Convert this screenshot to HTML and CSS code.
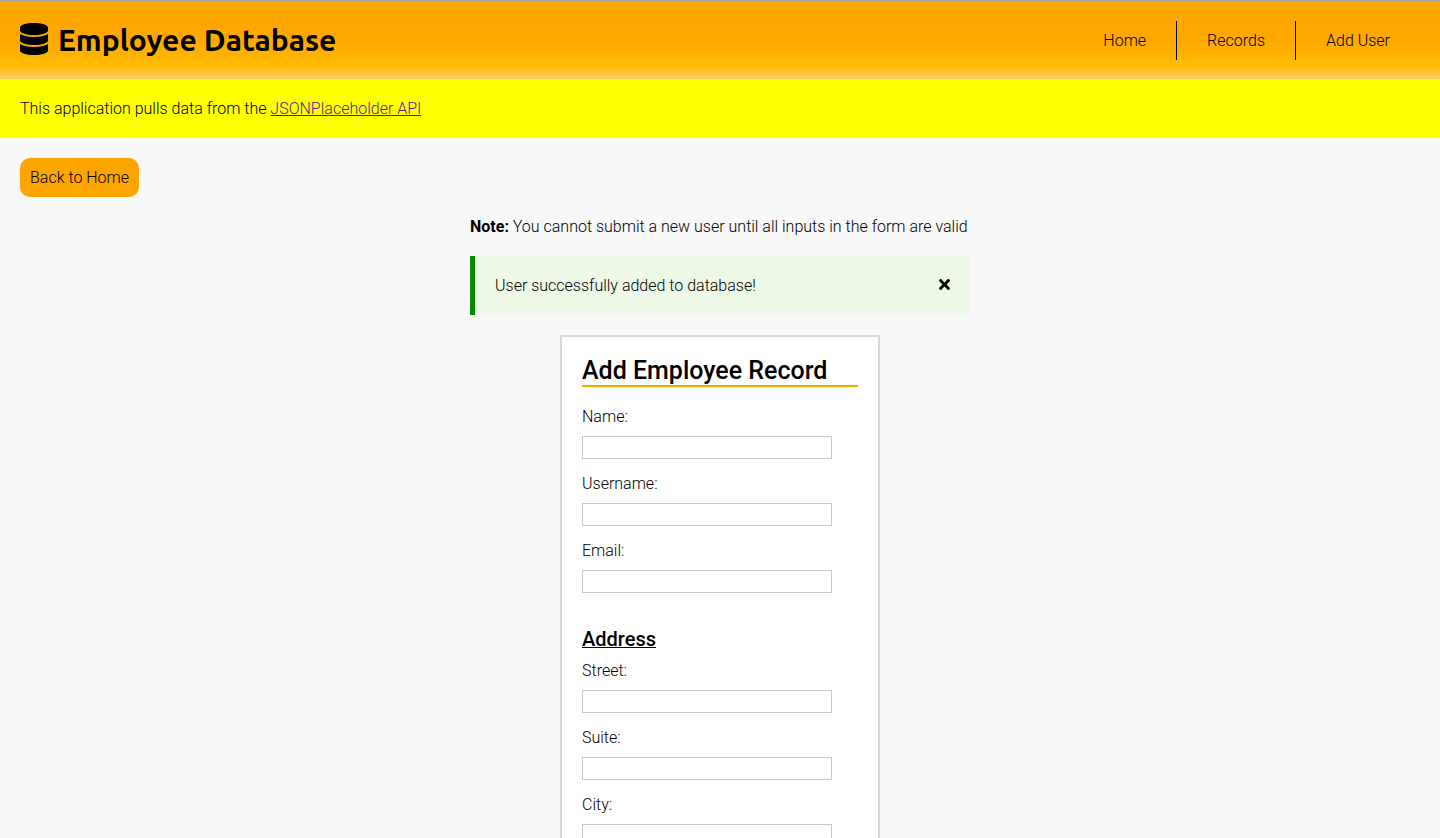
FILE: index.html
```html
<!DOCTYPE html>
<html lang="en">
<head>
  <meta charset="utf-8">
  <meta name="viewport" content="width=device-width, initial-scale=1">
  <title>Employee Database</title>
  <link rel="stylesheet" href="styles.css">
</head>
<body>
  <header class="site-header">
    <h1 class="brand">
      <svg class="brand-icon" viewBox="0 0 448 512" aria-hidden="true">
        <path d="M448 73.143v45.714C448 159.143 347.667 192 224 192S0 159.143 0 118.857V73.143C0 32.857 100.333 0 224 0s224 32.857 224 73.143zM448 176v102.857C448 319.143 347.667 352 224 352S0 319.143 0 278.857V176c48.125 33.143 136.208 48.572 224 48.572S399.874 209.143 448 176zm0 160v102.857C448 479.143 347.667 512 224 512S0 479.143 0 438.857V336c48.125 33.143 136.208 48.572 224 48.572S399.874 369.143 448 336z"/>
      </svg>
      Employee Database
    </h1>
    <nav class="site-nav">
      <a class="nav-link" href="#home">Home</a>
      <a class="nav-link" href="#records">Records</a>
      <a class="nav-link" href="#add-user">Add User</a>
    </nav>
  </header>
  <p class="banner">This application pulls data from the <a class="banner-link" href="#api">JSONPlaceholder API</a></p>
  <main class="content">
    <a class="back-button" href="#home">Back to Home</a>
    <div class="messages">
      <p><strong class="note-label">Note:</strong> You cannot submit a new user until all inputs in the form are valid</p>
      <div class="alert" role="status">
        <span>User successfully added to database!</span>
        <button class="alert-close" type="button" aria-label="Close">
          <svg class="close-icon" viewBox="0 0 352 352" aria-hidden="true">
            <path d="M242.72 176l100.07-100.07c12.28-12.28 12.28-32.19 0-44.48l-22.24-22.24c-12.28-12.28-32.19-12.28-44.48 0L176 109.28 75.93 9.21c-12.28-12.28-32.19-12.28-44.48 0L9.21 31.45c-12.28 12.28-12.28 32.19 0 44.48L109.28 176 9.21 276.07c-12.28 12.28-12.28 32.19 0 44.48l22.24 22.24c12.28 12.28 32.2 12.28 44.48 0L176 242.72l100.07 100.07c12.28 12.28 32.2 12.28 44.48 0l22.24-22.24c12.28-12.28 12.28-32.19 0-44.48L242.72 176z"/>
          </svg>
        </button>
      </div>
    </div>
    <form class="record-form">
      <h2 class="form-title">Add Employee Record</h2>
      <div class="fields">
        <div class="field"><label for="name">Name:</label><input class="text-input" id="name" type="text"></div>
        <div class="field"><label for="username">Username:</label><input class="text-input" id="username" type="text"></div>
        <div class="field"><label for="email">Email:</label><input class="text-input" id="email" type="email"></div>
      </div>
      <h3 class="section-title">Address</h3>
      <div class="fields">
        <div class="field"><label for="street">Street:</label><input class="text-input" id="street" type="text"></div>
        <div class="field"><label for="suite">Suite:</label><input class="text-input" id="suite" type="text"></div>
        <div class="field"><label for="city">City:</label><input class="text-input" id="city" type="text"></div>
      </div>
    </form>
  </main>
</body>
</html>
```
FILE: styles.css
```css
* {
  box-sizing: border-box;
  margin: 0;
  padding: 0;
}

html {
  scrollbar-width: none;
}

body {
  border-top: 1px solid #a6a6a6;
  background: #f8f8f8;
  color: #000;
  font: 300 16px/19px Roboto, sans-serif;
}

.site-header {
  display: flex;
  align-items: flex-start;
  justify-content: space-between;
  padding: 20px 20px 19px;
  background: linear-gradient(to bottom, #ffa500 0%, #ffa800 50%, #ffbb00 82%, #ffcc66 100%);
}

.brand {
  display: flex;
  align-items: flex-start;
  gap: 10px;
  font: 700 30px/38px Ubuntu, "Noto Sans", sans-serif;
}

.brand-icon {
  width: 28px;
  height: 32px;
  margin-top: 2px;
}

.site-nav {
  display: flex;
}

.nav-link {
  padding: 10px 30px;
  color: inherit;
  text-decoration: none;
}

.nav-link + .nav-link {
  border-left: 1px solid #000;
}

.banner {
  padding: 20px;
  background: #ff0;
}

.banner-link {
  color: #551a8b;
}

.content {
  display: flex;
  flex-direction: column;
  align-items: center;
  gap: 20px;
  padding: 20px;
}

.back-button {
  align-self: flex-start;
  padding: 10px;
  border-radius: 10px;
  background: #ffa500;
  color: inherit;
  text-decoration: none;
}

.messages {
  display: flex;
  flex-direction: column;
  gap: 20px;
  width: 100%;
  max-width: 500px;
}

.note-label {
  font-weight: 700;
}

.alert {
  display: flex;
  align-items: center;
  justify-content: space-between;
  padding: 20px;
  border-left: 5px solid #008c00;
  background: #edf8e7;
}

.alert-close {
  display: flex;
  padding-bottom: 3px;
  border: 0;
  background: none;
  cursor: pointer;
}

.close-icon {
  width: 11px;
  height: 11px;
}

.record-form {
  width: 100%;
  max-width: 320px;
  padding: 20px;
  border: 2px solid #d8d8d8;
  background: #fff;
}

.form-title {
  margin-bottom: 20px;
  border-bottom: 2px solid #ffa500;
  font-size: 25px;
  font-weight: 500;
  line-height: 28px;
}

.fields {
  display: flex;
  flex-direction: column;
  gap: 15px;
}

.field {
  display: flex;
  flex-direction: column;
  gap: 10px;
}

.text-input {
  width: 100%;
  max-width: 250px;
  height: 23px;
  border: 1px solid #c8c8c8;
  background: #fff;
  font: inherit;
}

.section-title {
  margin: 35px 0 10px;
  font-size: 20px;
  font-weight: 500;
  line-height: 23px;
  text-decoration: underline;
  text-decoration-thickness: 1px;
}
```
